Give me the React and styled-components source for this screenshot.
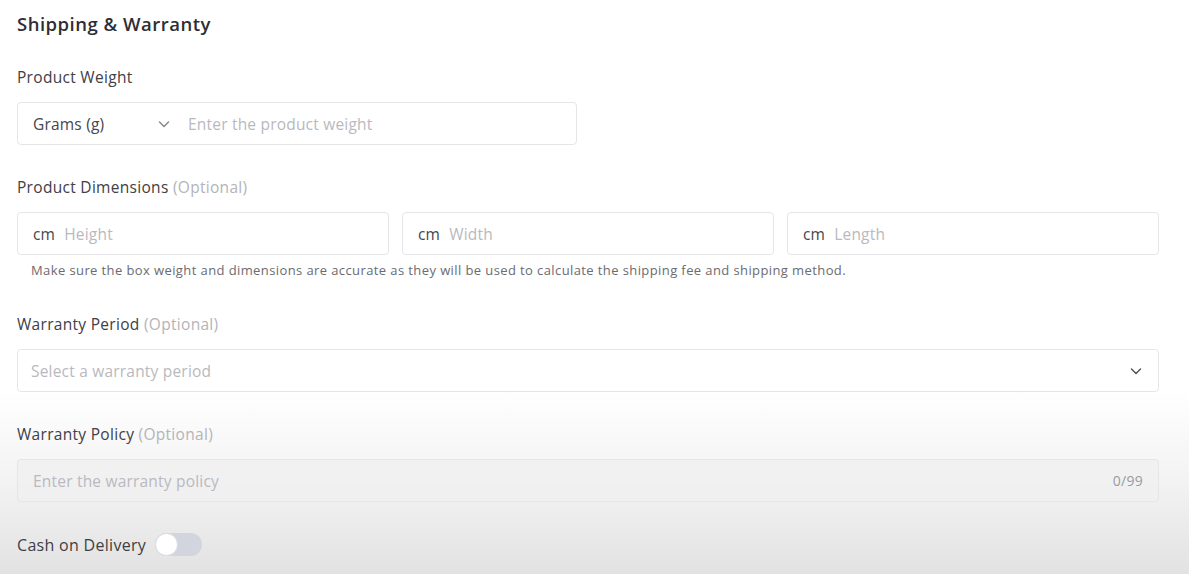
import React from "react";
import styled, { createGlobalStyle } from "styled-components";

const Global = createGlobalStyle`
  html, body { margin: 0; padding: 0; }
  body {
    font-family: "Open Sans", "Lato", sans-serif;
    color: #333;
    background: linear-gradient(to bottom, #ffffff 0px, #ffffff 390px, #f3f3f3 480px, #e2e2e3 574px);
    min-height: 574px;
  }
`;

const Page = styled.div`
  width: 1142px;
  padding: 12px 0 0 17px;
  display: flex;
  flex-direction: column;
`;

const Title = styled.h2`
  margin: 0;
  font-size: 18.5px;
  font-weight: 600;
  color: #2e2e33;
  line-height: 24px;
  letter-spacing: 0.5px;
`;

const Field = styled.div`
  display: flex;
  flex-direction: column;
  margin-top: ${(p) => p.$top}px;
`;

const Label = styled.div`
  font-size: 15.5px;
  color: #404046;
  line-height: 20px;
  margin-bottom: 15px;
  letter-spacing: 0.3px;
`;

const Optional = styled.span`
  color: #b4b4b8;
`;

const Box = styled.div`
  height: 43px;
  box-sizing: border-box;
  border: 1px solid #e6e6ea;
  border-radius: 4px;
  background: ${(p) => (p.$muted ? "rgba(240,240,241,0.7)" : "#fff")};
  display: flex;
  align-items: center;
  padding: 0 ${(p) => p.$pr ?? 14}px 0 ${(p) => p.$pl ?? 14}px;
  width: ${(p) => (p.$w ? `${p.$w}px` : "auto")};
  flex: ${(p) => (p.$grow ? 1 : "none")};
  font-size: 15.5px;
  letter-spacing: 0.2px;
`;

const Unit = styled.span`
  color: #46464c;
  min-width: ${(p) => p.$min ?? 0}px;
  margin-right: ${(p) => p.$gap ?? 0}px;
`;

const Placeholder = styled.span`
  color: #b9b9be;
  flex: 1;
`;

const Chevron = styled.svg`
  width: 14px;
  height: 14px;
  flex: none;
  margin: ${(p) => p.$m ?? "0"};
`;

const Row = styled.div`
  display: flex;
  gap: 13px;
`;

const Help = styled.div`
  font-size: 13px;
  color: #6b6b70;
  margin: 7px 0 0 14px;
  line-height: 16px;
  letter-spacing: 0.4px;
`;

const Counter = styled.span`
  color: #9a9aa0;
  font-size: 14px;
  letter-spacing: 0.3px;
`;

const ToggleRow = styled.div`
  display: flex;
  align-items: center;
  gap: 9px;
  margin-top: 31px;
  font-size: 16px;
  color: #3e3e44;
  letter-spacing: 0.3px;
`;

const Track = styled.div`
  width: 47px;
  height: 23px;
  border-radius: 12px;
  background: #d2d5de;
  position: relative;
`;

const Knob = styled.div`
  position: absolute;
  left: 1px;
  top: 1px;
  width: 21px;
  height: 21px;
  border-radius: 50%;
  background: #fff;
  box-shadow: 0 0 0 1px #dcdee4;
`;

const Down = ({ m, color = "#8a8a90" }) => (
  <Chevron $m={m} viewBox="0 0 14 14">
    <path d="M2.5 5 L7 9.5 L11.5 5" fill="none" stroke={color} strokeWidth="1.5" strokeLinecap="round" strokeLinejoin="round" />
  </Chevron>
);

export default function App() {
  return (
    <>
      <Global />
      <Page>
        <Title>Shipping &amp; Warranty</Title>

        <Field $top={31}>
          <Label>Product Weight</Label>
          <Box $w={560} $pl={15}>
            <Unit $min={124}>Grams (g)</Unit>
            <Down m="0 17px 0 0" />
            <Placeholder>Enter the product weight</Placeholder>
          </Box>
        </Field>

        <Field $top={32}>
          <Label>
            Product Dimensions <Optional>(Optional)</Optional>
          </Label>
          <Row>
            {["Height", "Width", "Length"].map((t) => (
              <Box key={t} $grow $pl={15}>
                <Unit $gap={9}>cm</Unit>
                <Placeholder>{t}</Placeholder>
              </Box>
            ))}
          </Row>
          <Help>
            Make sure the box weight and dimensions are accurate as they will be used to calculate the shipping fee and shipping method.
          </Help>
        </Field>

        <Field $top={36}>
          <Label>
            Warranty Period <Optional>(Optional)</Optional>
          </Label>
          <Box $pl={13} $pr={15}>
            <Placeholder>Select a warranty period</Placeholder>
            <Down color="#55555b" />
          </Box>
        </Field>

        <Field $top={32}>
          <Label>
            Warranty Policy <Optional>(Optional)</Optional>
          </Label>
          <Box $muted $pl={15} $pr={15}>
            <Placeholder>Enter the warranty policy</Placeholder>
            <Counter>0/99</Counter>
          </Box>
        </Field>

        <ToggleRow>
          Cash on Delivery
          <Track>
            <Knob />
          </Track>
        </ToggleRow>
      </Page>
    </>
  );
}
